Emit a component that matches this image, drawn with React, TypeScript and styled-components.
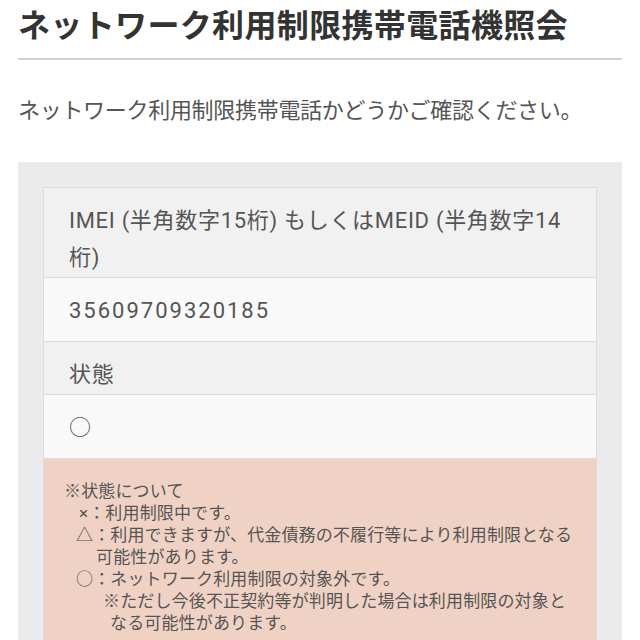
import React from "react";
import styled, { createGlobalStyle } from "styled-components";

const GlobalStyle = createGlobalStyle`
  html, body {
    margin: 0;
    padding: 0;
    background: #ffffff;
  }
  body {
    font-family: Roboto, "Noto Sans CJK JP", sans-serif;
    color: #444;
  }
`;

const Page = styled.div`
  padding: 0 18px;
  width: 604px;
`;

const Title = styled.h1`
  margin: 0;
  padding: 1px 0 7px;
  font-size: 32px;
  line-height: 50px;
  font-weight: 700;
  color: #333;
  letter-spacing: 0.35px;
  border-bottom: 2px solid #d2d2d2;
  white-space: nowrap;
`;

const Lead = styled.p`
  margin: 35px 0 35px;
  font-size: 22px;
  line-height: 32px;
  color: #555;
  letter-spacing: -0.3px;
  white-space: nowrap;
`;

const Panel = styled.section`
  background: #ebebed;
  padding: 25px 25px 0;
`;

const Table = styled.div`
  border: 1px solid #dcdcdc;
  border-bottom: none;
`;

const Cell = styled.div<{ $head?: boolean }>`
  padding: ${({ $head }) => ($head ? "14px 25px 1px" : "14px 25px 12px")};
  background: ${({ $head }) => ($head ? "#f1f1f1" : "#f9f9f9")};
  border-bottom: 1px solid #dcdcdc;
  font-size: 22px;
  line-height: 37px;
  color: #555;
  letter-spacing: ${({ $head }) => ($head ? "0.7px" : "2px")};
`;

const Notice = styled.div`
  background: #f0d2c4;
  padding: 21px 22px 20px 20px;
  font-size: 17px;
  line-height: 22px;
  color: #555;
  letter-spacing: 0.15px;
`;

const NoteLine = styled.div<{ $indent: number }>`
  padding-left: ${({ $indent }) => $indent}px;
  white-space: nowrap;
`;

export default function App() {
  return (
    <>
      <GlobalStyle />
      <Page>
        <Title>ネットワーク利用制限携帯電話機照会</Title>
        <Lead>ネットワーク利用制限携帯電話かどうかご確認ください。</Lead>
        <Panel>
          <Table>
            <Cell $head>IMEI (半角数字15桁) もしくはMEID (半角数字14桁)</Cell>
            <Cell>35609709320185</Cell>
            <Cell $head>状態</Cell>
            <Cell>○</Cell>
            <Notice>
              <NoteLine $indent={0}>※状態について</NoteLine>
              <NoteLine $indent={15}>×：利用制限中です。</NoteLine>
              <NoteLine $indent={12}>△：利用できますが、代金債務の不履行等により利用制限となる</NoteLine>
              <NoteLine $indent={32}>可能性があります。</NoteLine>
              <NoteLine $indent={12}>○：ネットワーク利用制限の対象外です。</NoteLine>
              <NoteLine $indent={39}>※ただし今後不正契約等が判明した場合は利用制限の対象と</NoteLine>
              <NoteLine $indent={46}>なる可能性があります。</NoteLine>
              <NoteLine $indent={12}>&nbsp;</NoteLine>
            </Notice>
          </Table>
        </Panel>
      </Page>
    </>
  );
}
